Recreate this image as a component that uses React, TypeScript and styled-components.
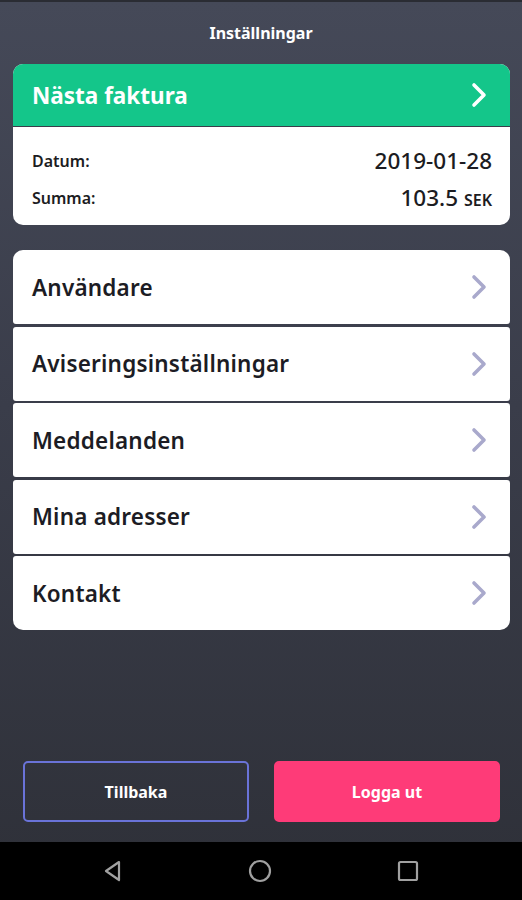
import styled, { createGlobalStyle } from "styled-components";

const GlobalStyle = createGlobalStyle`
  html, body {
    margin: 0;
    padding: 0;
    background: #2e3038;
  }
  * {
    box-sizing: border-box;
  }
`;

const menuItems = [
  "Användare",
  "Aviseringsinställningar",
  "Meddelanden",
  "Mina adresser",
  "Kontakt",
];

const Chevron = ({ color }: { color: string }) => (
  <svg width="18" height="26" viewBox="0 0 18 26">
    <path
      d="M4 3 L14 13 L4 23"
      fill="none"
      stroke={color}
      strokeWidth="3.6"
      strokeLinecap="round"
      strokeLinejoin="round"
    />
  </svg>
);

const App = () => {
  return (
    <Screen>
      <GlobalStyle />
      <Header>Inställningar</Header>
      <InvoiceCard>
        <InvoiceTop>
          <span>Nästa faktura</span>
          <Chevron color="#ffffff" />
        </InvoiceTop>
        <InvoiceBody>
          <InvoiceRow>
            <Label>Datum:</Label>
            <Value>2019-01-28</Value>
          </InvoiceRow>
          <InvoiceRow>
            <Label>Summa:</Label>
            <Value>
              103.5 <small>SEK</small>
            </Value>
          </InvoiceRow>
        </InvoiceBody>
      </InvoiceCard>
      <MenuList>
        {menuItems.map((title) => (
          <MenuRow key={title}>
            <span>{title}</span>
            <Chevron color="#a9a9cc" />
          </MenuRow>
        ))}
      </MenuList>
      <Spacer />
      <ButtonBar>
        <Button variant="outline">Tillbaka</Button>
        <Button variant="filled">Logga ut</Button>
      </ButtonBar>
      <NavBar>
        <svg width="24" height="24" viewBox="0 0 24 24">
          <path
            d="M19 3 L6 12 L19 21 Z"
            fill="none"
            stroke="#a0a0a0"
            strokeWidth="2.2"
            strokeLinejoin="round"
          />
        </svg>
        <svg width="24" height="24" viewBox="0 0 24 24">
          <circle cx="12" cy="12" r="10" fill="none" stroke="#a0a0a0" strokeWidth="2.2" />
        </svg>
        <svg width="24" height="24" viewBox="0 0 24 24">
          <rect x="3" y="3" width="18" height="18" rx="1.5" fill="none" stroke="#a0a0a0" strokeWidth="2.2" />
        </svg>
      </NavBar>
    </Screen>
  );
};

const Screen = styled.div`
  min-height: 900px;
  display: flex;
  flex-direction: column;
  background: linear-gradient(180deg, #454958 0%, #3a3d4a 45%, #2e3038 100%);
  font-family: "Noto Sans", "Open Sans", sans-serif;
  border-top: 2px solid #2a2c33;
`;

const Header = styled.div`
  height: 62px;
  display: flex;
  align-items: center;
  justify-content: center;
  color: #ffffff;
  font-size: 16px;
  font-weight: 700;
`;

const InvoiceCard = styled.div`
  margin: 0 12px 0 13px;
  border-radius: 10px;
  overflow: hidden;
  background: #ffffff;
`;

const InvoiceTop = styled.div`
  height: 63px;
  background: #14c68a;
  display: flex;
  align-items: center;
  justify-content: space-between;
  padding: 0 22px 0 19px;
  border-bottom: 1px solid #3a3d4a;
  > span {
    color: #ffffff;
    font-size: 22.5px;
    font-weight: 700;
  }
`;

const InvoiceBody = styled.div`
  height: 98px;
  padding: 18px 18px 0 19px;
  display: flex;
  flex-direction: column;
  gap: 6px;
`;

const InvoiceRow = styled.div`
  height: 31px;
  display: flex;
  align-items: center;
  justify-content: space-between;
`;

const Label = styled.span`
  font-size: 16px;
  font-weight: 600;
  color: #1c1c22;
`;

const Value = styled.span`
  font-size: 22.5px;
  font-weight: 500;
  color: #1c1c22;
  > small {
    font-size: 16px;
    font-weight: 600;
  }
`;

const MenuList = styled.div`
  margin: 25px 12px 0 13px;
  display: flex;
  flex-direction: column;
  gap: 2.5px;
`;

const MenuRow = styled.div`
  height: 74px;
  background: #ffffff;
  border-radius: 3px;
  display: flex;
  align-items: center;
  justify-content: space-between;
  padding: 0 22px 0 19px;
  &:first-child {
    border-radius: 10px 10px 3px 3px;
  }
  &:last-child {
    border-radius: 3px 3px 10px 10px;
  }
  > span {
    font-size: 22.5px;
    font-weight: 600;
    letter-spacing: 0.2px;
    color: #1c1c24;
  }
`;

const Spacer = styled.div`
  flex: 1;
`;

const ButtonBar = styled.div`
  display: flex;
  gap: 25px;
  padding: 0 22px 20px 23px;
`;

const Button = styled.div<{ variant: "outline" | "filled" }>`
  flex: 1;
  height: 61px;
  display: flex;
  align-items: center;
  justify-content: center;
  border-radius: 5px;
  font-size: 16px;
  font-weight: 700;
  color: #ffffff;
  background: ${({ variant }) => (variant === "filled" ? "#fe3b78" : "transparent")};
  border: 2px solid ${({ variant }) => (variant === "filled" ? "#fe3b78" : "#6a73d8")};
`;

const NavBar = styled.div`
  height: 58px;
  background: #000000;
  display: flex;
  align-items: center;
  justify-content: center;
  gap: 124px;
  padding-right: 3px;
`;

export default App;
